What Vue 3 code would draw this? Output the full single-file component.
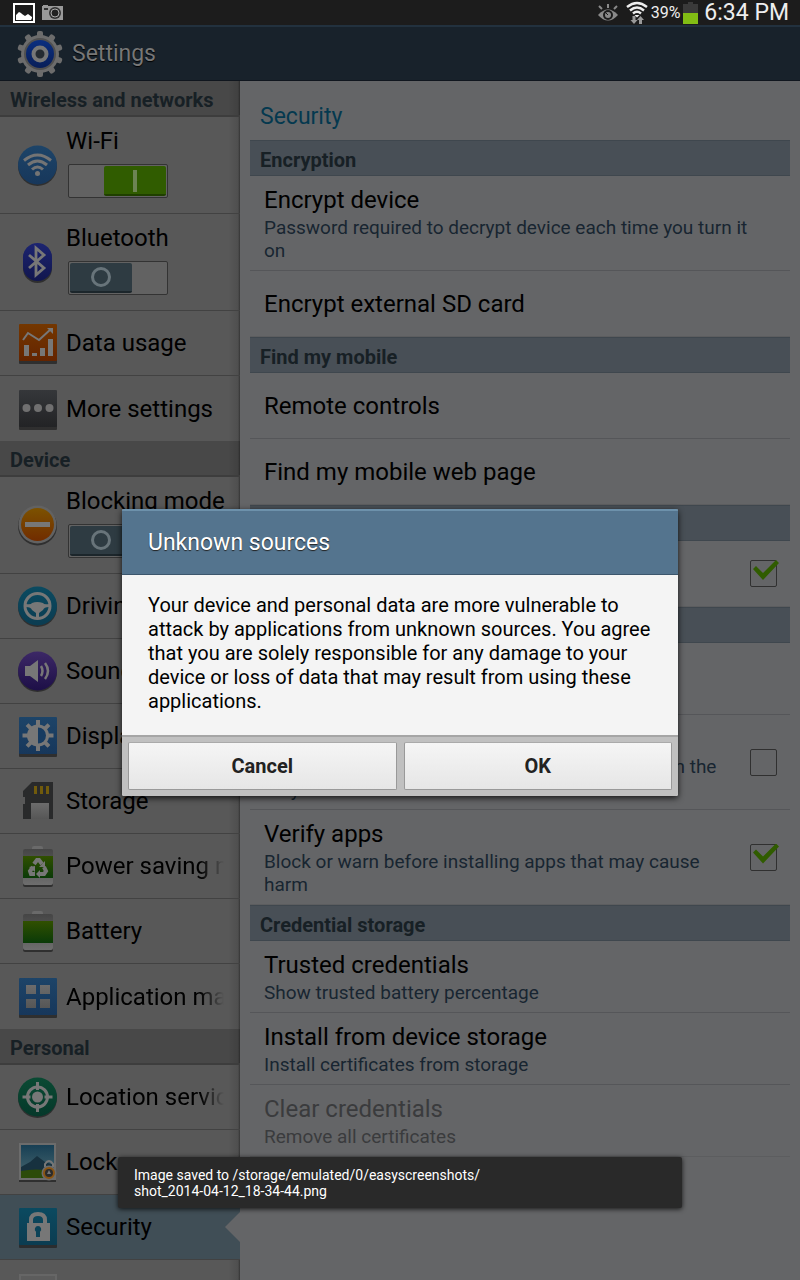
<!-- Tablet settings screen with the unknown sources confirmation open -->
<template>
  <div class="screen">
    <svg class="defs" width="0" height="0" aria-hidden="true">
      <defs>
        <linearGradient v-for="g in gradients" :id="g.id" :key="g.id" x1="0" y1="0" x2="0" y2="1">
          <stop offset="0" :stop-color="g.from" />
          <stop offset="1" :stop-color="g.to" />
        </linearGradient>
      </defs>
    </svg>

    <div class="status-bar">
      <div class="status-group">
        <svg width="22" height="20" viewBox="0 0 22 20">
          <rect x="1" y="1" width="20" height="18" fill="#1c1c1c" stroke="#fff" stroke-width="2" />
          <path d="M3 15v-3l3-3 2 1 1 1 3 2 3-2 4 3v1l-1 2H3z" fill="#fff" />
        </svg>
        <svg width="24" height="18" viewBox="0 0 24 18">
          <path d="M1 2h1V1h5v1h15v14H1z" fill="#999" />
          <rect x="3" y="4" width="4" height="2" fill="#333" />
          <circle cx="14" cy="9" r="6" fill="#333" />
          <circle cx="14" cy="9" r="4" fill="#222" stroke="#aaa" stroke-width="1" />
        </svg>
      </div>
      <div class="status-group right">
        <svg width="22" height="20" viewBox="0 0 22 20">
          <g stroke="#8a8a8a" stroke-width="2">
            <path d="M11 1v4M2 3l3 3M20 3l-3 3" />
          </g>
          <path d="M1 12q10-11 20 0q-10 11-20 0z" fill="#8a8a8a" />
          <circle cx="11" cy="12" r="5" fill="#1c1c1c" />
          <circle cx="11" cy="12" r="3" fill="#8a8a8a" />
          <path d="M8 9l3 3" stroke="#1c1c1c" stroke-width="1" />
        </svg>
        <svg width="22" height="24" viewBox="0 0 22 24">
          <g fill="none" stroke="#eee" stroke-width="2.400">
            <path d="M1 6q10-8 20 0M4 9.500q7-6 14 0M7 12.500q4-3.500 8 0" />
          </g>
          <path d="M8.500 14h5L11 16.500z" fill="#eee" />
          <path d="M6.500 15h3v4h2l-3.500 4-3.500-4h2zM13 23h3v-4h2l-3.500-4-3.500 4h2z" fill="#999" />
        </svg>
        <span class="percent">39%</span>
        <svg width="15" height="22" viewBox="0 0 15 22">
          <path d="M5 0h5v2h5v20H0V2h5z" fill="#3a3a3a" />
          <path d="M0 11h15v11H0z" fill="#82bd14" />
        </svg>
        <span class="clock">6:34 PM</span>
      </div>
    </div>

    <header class="app-bar">
      <svg class="gear" width="48" height="48" viewBox="0 0 48 48">
        <g fill="#6c6c6c">
          <rect v-for="n in 5" :key="n" x="21" y="1" width="6" height="46" rx="2" :transform="`rotate(${n * 36} 24 24)`" />
          <circle cx="24" cy="24" r="19" />
        </g>
        <circle cx="24" cy="24" r="16" fill="#505050" />
        <circle cx="24" cy="24" r="14" fill="url(#gear)" />
        <circle cx="24" cy="24" r="6.500" fill="#252b31" stroke="#777" stroke-width="4" />
      </svg>
      <h1>Settings</h1>
    </header>

    <div class="panes">
      <nav class="sidebar">
        <section v-for="group in groups" :key="group.title">
          <h2 class="side-heading">{{ group.title }}</h2>
          <template v-for="item in group.items" :key="item.label">
            <label v-if="'on' in item" class="side-row tall">
              <svg class="side-icon" viewBox="0 0 40 44" v-html="icons[item.icon]"></svg>
              <span class="side-switch">
                <span class="side-label">{{ item.label }}</span>
                <input v-model="item.on" type="checkbox" role="switch" class="switch" />
              </span>
            </label>
            <a v-else href="#" class="side-row" :class="{ selected: item.selected }">
              <svg class="side-icon" viewBox="0 0 40 44" v-html="icons[item.icon]"></svg>
              <span class="side-label" :class="{ fade: item.long }">{{ item.label }}</span>
            </a>
          </template>
        </section>
      </nav>

      <main class="details">
        <h2 class="details-title">Security</h2>
        <section v-for="section in sections" :key="section.title">
          <h3 class="section-heading">{{ section.title }}</h3>
          <component
            :is="'checked' in row ? 'label' : 'div'"
            v-for="row in section.rows"
            :key="row.title"
            class="row"
            :class="{ disabled: row.disabled }"
          >
            <span class="row-text">
              <span class="row-title">{{ row.title }}</span>
              <span v-if="row.note" class="row-note">{{ row.note }}</span>
            </span>
            <input v-if="'checked' in row" v-model="row.checked" type="checkbox" class="check" />
          </component>
        </section>
      </main>
    </div>

    <div v-if="dialogOpen" class="dialog-layer">
      <div class="dialog" role="dialog" aria-labelledby="dialog-title">
        <h2 id="dialog-title" class="dialog-title">Unknown sources</h2>
        <p class="dialog-text">
          Your device and personal data are more vulnerable to attack by applications from unknown
          sources. You agree that you are solely responsible for any damage to your device or loss
          of data that may result from using these applications.
        </p>
        <div class="dialog-actions">
          <button type="button" @click="closeDialog">Cancel</button>
          <button type="button" @click="closeDialog">OK</button>
        </div>
      </div>
    </div>

    <div class="toast" role="status">
      Image saved to /storage/emulated/0/easyscreenshots/<br />shot_2014-04-12_18-34-44.png
    </div>
  </div>
</template>

<script setup>
import { ref } from 'vue'

const dialogOpen = ref(true)

function closeDialog() {
  dialogOpen.value = false
}

// Sidebar entries; those with an `on` value carry a switch
const groups = ref([
  {
    title: 'Wireless and networks',
    items: [
      { label: 'Wi-Fi', icon: 'wifi', on: true },
      { label: 'Bluetooth', icon: 'bluetooth', on: false },
      { label: 'Data usage', icon: 'data' },
      { label: 'More settings', icon: 'more' }
    ]
  },
  {
    title: 'Device',
    items: [
      { label: 'Blocking mode', icon: 'blocking', on: false },
      { label: 'Driving mode', icon: 'driving' },
      { label: 'Sound', icon: 'sound' },
      { label: 'Display', icon: 'display' },
      { label: 'Storage', icon: 'storage' },
      { label: 'Power saving mode', icon: 'power', long: true },
      { label: 'Battery', icon: 'battery' },
      { label: 'Application manager', icon: 'apps', long: true }
    ]
  },
  {
    title: 'Personal',
    items: [
      { label: 'Location services', icon: 'location', long: true },
      { label: 'Lock screen', icon: 'lock' },
      { label: 'Security', icon: 'security', selected: true },
      { label: 'Language and input', icon: 'language', long: true }
    ]
  }
])

const sections = ref([
  {
    title: 'Encryption',
    rows: [
      { title: 'Encrypt device', note: 'Password required to decrypt device each time you turn it on' },
      { title: 'Encrypt external SD card' }
    ]
  },
  {
    title: 'Find my mobile',
    rows: [{ title: 'Remote controls' }, { title: 'Find my mobile web page' }]
  },
  {
    title: 'Passwords',
    rows: [{ title: 'Make passwords visible', checked: true }]
  },
  {
    title: 'Device administration',
    rows: [
      { title: 'Device administrators', note: 'View or disable device administrators' },
      {
        title: 'Unknown sources',
        note: 'Allow installation of apps from sources other than the Play Store',
        checked: false
      },
      {
        title: 'Verify apps',
        note: 'Block or warn before installing apps that may cause harm',
        checked: true
      }
    ]
  },
  {
    title: 'Credential storage',
    rows: [
      { title: 'Trusted credentials', note: 'Show trusted battery percentage' },
      { title: 'Install from device storage', note: 'Install certificates from storage' },
      { title: 'Clear credentials', note: 'Remove all certificates', disabled: true }
    ]
  }
])

// Icon fills
const gradients = [
  { id: 'gear', from: '#0b2f80', to: '#081e58' },
  { id: 'blue', from: '#1d4468', to: '#17375b' },
  { id: 'indigo', from: '#1c2470', to: '#11164e' },
  { id: 'orange', from: '#743700', to: '#642400' },
  { id: 'grey', from: '#35373a', to: '#222325' },
  { id: 'amber', from: '#7c5200', to: '#712c00' },
  { id: 'cyan', from: '#0b4a60', to: '#0b3c51' },
  { id: 'violet', from: '#3c2866', to: '#1d0f47' },
  { id: 'leaf', from: '#315000', to: '#0a3a08' },
  { id: 'metal', from: '#454545', to: '#6e6e6e' },
  { id: 'green', from: '#0a4a33', to: '#05382a' },
  { id: 'sky', from: '#173f54', to: '#4a6870' },
  { id: 'silver', from: '#6c6c6c', to: '#565656' }
]

const shade = 'fill="#262626" opacity="0.8"'

function disc(fill) {
  return `<circle cx="20.500" cy="23.500" r="19.500" ${shade}/><circle cx="20.500" cy="22" r="19.500" fill="url(#${fill})"/>`
}

function tile(fill) {
  return `<rect x="2" y="4" width="38" height="39" rx="1" ${shade}/><rect x="2" y="3" width="38" height="37" rx="1" fill="url(#${fill})"/>`
}

function cell(fill) {
  return `<path d="M15 4q0-2 2-2h7q2 0 2 2v3H15z" fill="#6a6a6a"/>
    <rect x="6" y="8" width="30" height="35" rx="2" ${shade}/>
    <rect x="6" y="5" width="30" height="36" rx="2" fill="url(#metal)"/>
    <rect x="6" y="12" width="30" height="22" fill="url(#${fill})"/>`
}

const icons = {
  wifi: `${disc('blue')}
    <g fill="none" stroke="#747474" stroke-width="3">
      <path d="M7 17.500q13.500-11 27 0M11 22q9.500-8 19 0M15 26.500q5.500-5 11 0"/></g>
    <circle cx="20.500" cy="30.500" r="2.500" fill="#747474"/>`,
  bluetooth: `<rect x="6" y="4" width="29" height="39" rx="14.500" ${shade}/>
    <rect x="6" y="3" width="29" height="38" rx="14.500" fill="url(#indigo)"/>
    <path d="M12 15l15 13-8 7V8l8 7-15 13" fill="none" stroke="#777" stroke-width="2.800"/>`,
  data: `${tile('orange')}
    <path d="M6 19l5-7 11 7 12-11" fill="none" stroke="#777" stroke-width="2"/>
    <path d="M30 7h6v6z" fill="#777"/>
    <path d="M7 24h5v11H7zM15 32h5v3h-5zM23 27h5v8h-5zM31 18h5v17h-5z" fill="#777"/>`,
  more: `${tile('grey')}
    <g fill="#707070"><circle cx="9.500" cy="21" r="4"/><circle cx="21" cy="21" r="4"/><circle cx="32.500" cy="21" r="4"/></g>`,
  blocking: `<circle cx="20.500" cy="23" r="19.500" ${shade}/><circle cx="20.500" cy="21.500" r="19" fill="#626262"/>
    <circle cx="20.500" cy="21.500" r="16.500" fill="url(#amber)"/>
    <rect x="8" y="19" width="25" height="5" fill="#777"/>`,
  driving: `${disc('cyan')}
    <circle cx="20.500" cy="22" r="12.500" fill="none" stroke="#777" stroke-width="3"/>
    <path d="M9 20q5 1 6-1 5-2 11 0 1 2 6 1v3q-5 0-6 3l-4 3v6h-3v-6l-4-3q-1-3-6-3z" fill="#777"/>`,
  sound: `${disc('violet')}
    <path d="M8 17h5l8-6v22l-8-6H8z" fill="#777"/>
    <g fill="none" stroke="#777" stroke-width="2.500"><path d="M24 17q3 5 0 10M28 14q6 8 0 16"/></g>`,
  display: `${tile('blue')}
    <g fill="#777">
      <path d="M19 6h4v31h-4zM5.500 19.500h31v4h-31z"/>
      <path d="M19 6h4v31h-4zM5.500 19.500h31v4h-31z" transform="rotate(45 21 21.500)"/>
      <circle cx="21" cy="21.500" r="11"/></g>
    <path d="M21 13.500a8 8 0 0 1 0 16z" fill="#173b60"/>`,
  storage: `<path d="M15 3h21v37H6V25h2v-7H6v-6z" fill="#292a2b"/>
    <path d="M17 7h3v8h-3zM23 7h3v8h-3zM29 7h3v8h-3z" fill="#715b0c"/>
    <rect x="14" y="24" width="18" height="16" fill="url(#silver)"/>`,
  power: `${cell('leaf')}
    <g fill="none" stroke="#777" stroke-width="4">
      <path d="M17 20l3-4h2l3 4M27 23l2 4-2 3h-5M18 30h-4l-1-3 3-4"/></g>
    <path d="M28 17v6h-6zM23 26v8l-4-4zM12 23l6-1v6z" fill="#777"/>`,
  battery: cell('leaf'),
  apps: `${tile('blue')}
    <path d="M9 10h10v9H9zM23 10h10v9H23zM9 24h10v9H9zM23 24h10v9H23z" fill="url(#silver)"/>`,
  location: `${disc('green')}
    <circle cx="20.500" cy="22" r="10" fill="none" stroke="#777" stroke-width="3"/>
    <circle cx="20.500" cy="22" r="5.500" fill="#777"/>
    <path d="M20.500 7v8M20.500 29v8M5.500 22h8M27.500 22h8" stroke="#777" stroke-width="3"/>`,
  lock: `<rect x="2" y="5" width="37" height="37" ${shade}/>
    <rect x="2" y="3" width="37" height="37" fill="#6c6c6c"/>
    <rect x="4" y="5" width="33" height="33" fill="url(#sky)"/>
    <path d="M4 27l9-5 7-6 8 6 9 3v13H4z" fill="#17313f"/>
    <path d="M4 31q14-3 33 0v7H4z" fill="#2c4b0a"/>
    <path d="M28 27v-3q4-6 8 0v3" fill="none" stroke="#777" stroke-width="2"/>
    <circle cx="32" cy="33" r="7.500" fill="#6c6c6c"/>
    <circle cx="32" cy="33" r="5" fill="#2b2b2b" stroke="#8a5412" stroke-width="2"/>
    <path d="M32 30l2 4h-4z" fill="#777"/>`,
  security: `${tile('cyan')}
    <path d="M14 20v-5q0-6 7-6t7 6v5" fill="none" stroke="#777" stroke-width="4"/>
    <rect x="10" y="18" width="23" height="18" fill="#777"/>
    <path d="M21 21a3.200 3.200 0 0 1 2 5.700V32h-4v-5.300A3.200 3.200 0 0 1 21 21z" fill="#0b4358"/>`,
  language: `<rect x="2" y="3" width="38" height="38" fill="#666"/><rect x="4" y="5" width="34" height="34" fill="#5c5c5c"/>`
}
</script>

<style>
body {
  margin: 0;
  background: #646567;
}
</style>

<style scoped>
.screen {
  position: relative;
  display: flex;
  flex-direction: column;
  height: 100vh;
  overflow: hidden;
  font-family: Roboto, "Liberation Sans", sans-serif;
  color: #000;
  background: #646567;
}

h1,
h2,
h3,
p {
  margin: 0;
}

.defs {
  position: absolute;
}

.status-bar {
  display: flex;
  flex: none;
  align-items: center;
  justify-content: space-between;
  height: 25px;
  padding: 0 11px 0 13px;
  color: #eee;
  background: #1c1c1c;
}

.status-group {
  display: flex;
  align-items: center;
  gap: 6px;
}

.status-group.right {
  gap: 3px;
}

.right svg:first-child {
  margin-right: 4px;
}

.percent {
  font-size: 16px;
}

.clock {
  margin-left: 3px;
  font-size: 23px;
  line-height: 25px;
}

.app-bar {
  display: flex;
  flex: none;
  align-items: center;
  gap: 8px;
  box-sizing: border-box;
  height: 56px;
  padding: 0 16px;
  border-top: 2px solid #22313e;
  border-bottom: 1px solid #10161e;
  background: #18222b;
}

.app-bar h1 {
  font-size: 23px;
  font-weight: 400;
  line-height: 30px;
  color: #777;
  text-shadow: 0 1px 1px #000;
}

.gear {
  flex: none;
}

.panes {
  display: flex;
  flex: 1;
  min-height: 0;
}

/* Sidebar */
.sidebar {
  flex: 0 0 240px;
  overflow: hidden;
  background: linear-gradient(to right, transparent 228px, rgba(0, 0, 0, 0.1) 238px, rgba(0, 0, 0, 0.4)) #585858;
}

.side-heading {
  box-sizing: border-box;
  height: 36px;
  padding: 0 10px;
  border-bottom: 2px solid #3d3d3d;
  font-size: 20px;
  font-weight: 700;
  line-height: 38px;
  color: #172025;
  background: linear-gradient(to right, transparent 228px, rgba(0, 0, 0, 0.1) 238px, rgba(0, 0, 0, 0.4)) #484848;
}

.side-row {
  position: relative;
  display: flex;
  align-items: center;
  gap: 9px;
  box-sizing: border-box;
  height: 65px;
  padding: 0 16px 0 17px;
  border-bottom: 1px solid #424242;
  color: #000;
  text-decoration: none;
}

.side-row.tall {
  height: 97px;
}

.side-row:last-child {
  border-bottom: 0;
}

.side-icon {
  flex: none;
  width: 40px;
  height: 44px;
}

.side-label {
  overflow: hidden;
  font-size: 24px;
  line-height: 32px;
  white-space: nowrap;
}

.side-label.fade {
  mask-image: linear-gradient(to right, #000 calc(100% - 24px), transparent);
}

.side-switch {
  display: flex;
  flex-direction: column;
  gap: 7px;
  padding-bottom: 8px;
}

.side-row.selected {
  background: #404e56;
}

.side-row.selected::after {
  content: "";
  position: absolute;
  top: 17px;
  right: 0;
  width: 15px;
  height: 30px;
  background: #646567;
  clip-path: polygon(100% 0, 100% 100%, 0 50%);
}

.switch {
  position: relative;
  appearance: none;
  box-sizing: border-box;
  width: 100px;
  height: 34px;
  margin: 0 2px;
  border: 1px solid #333;
  border-radius: 2px;
  background: #626262;
}

.switch::before,
.switch::after {
  content: "";
  position: absolute;
  box-sizing: border-box;
}

.switch::before {
  top: 1px;
  left: 1px;
  width: 62px;
  height: 30px;
  border-bottom: 2px solid #1c262b;
  border-radius: 2px;
  background: #2e3b42;
}

.switch::after {
  top: 5px;
  left: 22px;
  width: 20px;
  height: 20px;
  border: 3px solid #68747a;
  border-radius: 50%;
}

.switch:checked::before {
  left: 35px;
  border-color: #1f3f00;
  background: #305c00;
}

.switch:checked::after {
  left: 64px;
  width: 4px;
  height: 22px;
  border: 0;
  border-radius: 0;
  background: #6d8453;
}

/* Details */
.details {
  flex: 1;
  min-width: 0;
  padding: 0 10px;
  background: #646567;
}

.details-title {
  height: 59px;
  padding: 0 10px;
  font-size: 23px;
  font-weight: 400;
  line-height: 71px;
  color: #04394f;
}

.section-heading {
  box-sizing: border-box;
  height: 36px;
  padding: 0 10px;
  border-top: 1px solid #3f474e;
  border-bottom: 1px solid #3f474e;
  font-size: 20px;
  font-weight: 700;
  line-height: 38px;
  color: #172025;
  background: #484f56;
}

.row {
  display: flex;
  align-items: center;
  justify-content: space-between;
  gap: 24px;
  box-sizing: border-box;
  min-height: 66px;
  padding: 8px 13px 8px 14px;
  border-bottom: 1px solid #555659;
}

.row:last-child {
  border-color: #5c5d5f;
}

.row-text {
  display: flex;
  flex-direction: column;
  max-width: 500px;
}

.row-title {
  font-size: 24px;
  line-height: 32px;
}

.row-note {
  font-size: 19px;
  line-height: 23px;
  color: #182531;
}

.disabled .row-title,
.disabled .row-note {
  color: #3a3b3d;
}

.check {
  position: relative;
  flex: none;
  appearance: none;
  box-sizing: border-box;
  width: 27px;
  height: 27px;
  margin: 0;
  border: 1px solid #303030;
  border-radius: 2px;
}

.check:checked::after {
  content: "";
  position: absolute;
  top: -1px;
  left: -1px;
  width: 30px;
  height: 20px;
  background: #305c00;
  clip-path: polygon(3px 9px, 6px 6px, 13px 13px, 26px 0, 29px 3px, 13px 20px);
}

/* Dialog */
.dialog-layer {
  position: absolute;
  inset: 25px 0 0;
  display: flex;
  align-items: center;
  justify-content: center;
}

.dialog {
  width: 90%;
  max-width: 556px;
  border-radius: 2px;
  background: #f4f4f4;
  box-shadow: 0 2px 6px rgba(0, 0, 0, 0.8);
  overflow: hidden;
}

.dialog-title {
  box-sizing: border-box;
  height: 66px;
  padding: 0 26px;
  border-top: 2px solid #6d91ab;
  border-bottom: 1px solid #3c566c;
  font-size: 23px;
  font-weight: 400;
  line-height: 63px;
  color: #fff;
  text-shadow: 0 1px 1px #222;
  background: #54748e;
}

.dialog-text {
  padding: 18px 26px 22px;
  font-size: 20px;
  line-height: 24px;
}

.dialog-actions {
  display: flex;
  gap: 7px;
  padding: 5px 6px 6px;
  border-top: 2px solid #a5a5a5;
  background: #c0c0c0;
}

.dialog-actions button {
  flex: 1;
  height: 48px;
  border: 1px solid #999;
  border-top-color: #aaa;
  border-radius: 2px;
  font: 700 20px Roboto, "Liberation Sans", sans-serif;
  color: #222;
  background: linear-gradient(#f5f5f5, #e6e6e6);
}

.toast {
  position: absolute;
  bottom: 72px;
  left: 50%;
  box-sizing: border-box;
  width: 90%;
  max-width: 564px;
  padding: 10px 16px 9px;
  border-radius: 2px;
  font-size: 14px;
  line-height: 16px;
  color: #fff;
  background: #292929;
  box-shadow: 0 1px 5px rgba(0, 0, 0, 0.8);
  transform: translateX(-50%);
}
</style>
